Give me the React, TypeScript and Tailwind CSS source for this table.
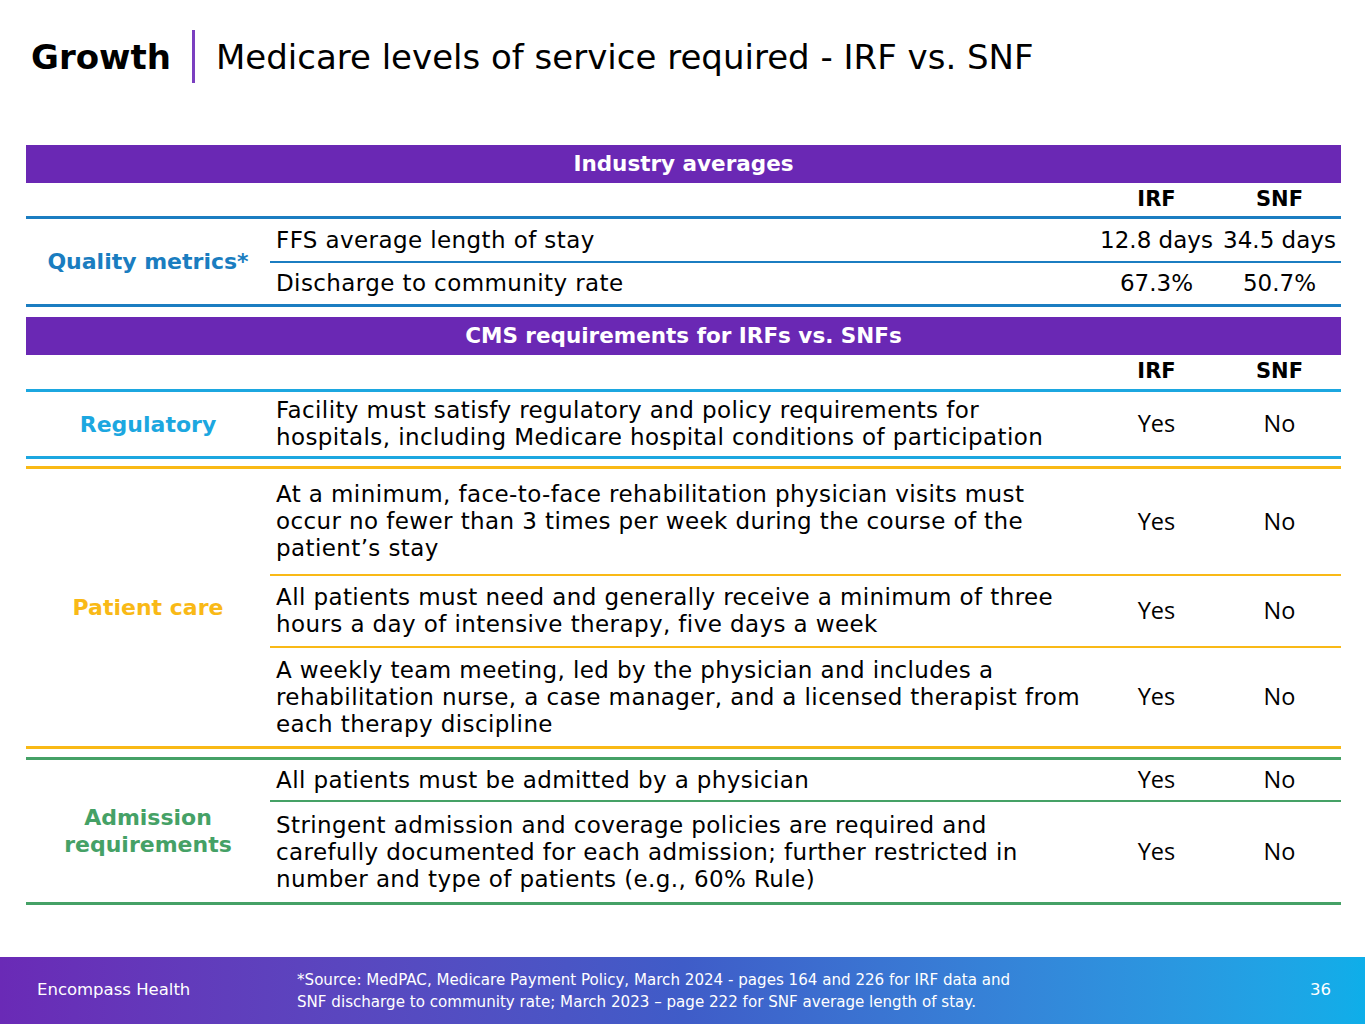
import React from "react";

const PURPLE = "bg-[#6a28b4]";

type Row = { text: React.ReactNode; irf: string; snf: string; h: string };

function DataRow({ row, border, yesNo }: { row: Row; border?: string; yesNo?: boolean }) {
  const val = yesNo ? "font-['Open_Sans',sans-serif] text-[23.5px]" : "";
  return (
    <div className={`flex items-center ${row.h} ${border ?? ""}`}>
      <div className="flex-1 pl-[6px] pr-2 leading-[27px] tracking-[0.4px]">{row.text}</div>
      <div className={`w-[123px] text-center whitespace-nowrap ${val}`}>{row.irf}</div>
      <div className={`w-[123px] text-center whitespace-nowrap ${val}`}>{row.snf}</div>
    </div>
  );
}

function Group({
  label,
  labelColor,
  rows,
  innerBorder,
  className,
}: {
  label: React.ReactNode;
  labelColor: string;
  rows: Row[];
  innerBorder: string;
  className: string;
}) {
  return (
    <div className={`flex ${className}`}>
      <div
        className={`w-[244px] flex items-center justify-center text-center text-[22px] font-bold leading-[27px] ${labelColor}`}
      >
        {label}
      </div>
      <div className="flex-1">
        {rows.map((r, i) => (
          <DataRow
            key={i}
            row={r}
            yesNo={r.irf === "Yes"}
            border={i < rows.length - 1 ? innerBorder : ""}
          />
        ))}
      </div>
    </div>
  );
}

function BarHeader({ title }: { title: string }) {
  return (
    <div
      className={`${PURPLE} h-[38px] flex items-center justify-center text-[21.5px] text-white font-bold`}
    >
      {title}
    </div>
  );
}

function ColHeader({ className }: { className: string }) {
  return (
    <div className={`flex items-center justify-end text-[21px] font-bold ${className}`}>
      <div className="w-[123px] text-center">IRF</div>
      <div className="w-[123px] text-center">SNF</div>
    </div>
  );
}

export default function App() {
  return (
    <div className="h-[1024px] w-[1365px] flex flex-col bg-white text-black font-['DejaVu_Sans',sans-serif] overflow-hidden">
      {/* Title */}
      <div className="flex items-center pl-[31px] pt-[30px]">
        <span className="text-[34px] font-bold leading-none">Growth</span>
        <span className="mx-[21px] h-[53px] w-[3px] bg-[#7b3fc0]" />
        <span className="text-[34px] leading-none">
          Medicare levels of service required - IRF vs. SNF
        </span>
      </div>

      {/* Table */}
      <div className="mt-[62px] ml-[26px] w-[1315px] text-[23px]">
        <BarHeader title="Industry averages" />
        <ColHeader className="h-[36px] border-b-[3px] border-[#1b7dc1]" />
        <Group
          label="Quality metrics*"
          labelColor="text-[#1a7dc0]"
          innerBorder="border-b-2 border-[#1b7dc1]"
          className="border-b-[3px] border-[#1b7dc1]"
          rows={[
            { text: "FFS average length of stay", irf: "12.8 days", snf: "34.5 days", h: "h-[44px]" },
            { text: "Discharge to community rate", irf: "67.3%", snf: "50.7%", h: "h-[41px]" },
          ]}
        />

        <div className="mt-[10px]">
          <BarHeader title="CMS requirements for IRFs vs. SNFs" />
        </div>
        <ColHeader className="h-[37px] border-b-[3px] border-[#1ca7e0]" />
        <Group
          label="Regulatory"
          labelColor="text-[#1ca7e0]"
          innerBorder=""
          className="border-b-[3px] border-[#1ca7e0]"
          rows={[
            {
              text: (
                <>
                  Facility must satisfy regulatory and policy requirements for
                  <br />
                  hospitals, including Medicare hospital conditions of participation
                </>
              ),
              irf: "Yes",
              snf: "No",
              h: "h-[64px]",
            },
          ]}
        />

        <Group
          label="Patient care"
          labelColor="text-[#f9b916]"
          innerBorder="border-b-2 border-[#f9b916]"
          className="mt-[7px] border-y-[3px] border-[#f9b916]"
          rows={[
            {
              text: (
                <>
                  At a minimum, face-to-face rehabilitation physician visits must
                  <br />
                  occur no fewer than 3 times per week during the course of the
                  <br />
                  patient’s stay
                </>
              ),
              irf: "Yes",
              snf: "No",
              h: "h-[107px]",
            },
            {
              text: (
                <>
                  All patients must need and generally receive a minimum of three
                  <br />
                  hours a day of intensive therapy, five days a week
                </>
              ),
              irf: "Yes",
              snf: "No",
              h: "h-[72px]",
            },
            {
              text: (
                <>
                  A weekly team meeting, led by the physician and includes a
                  <br />
                  rehabilitation nurse, a case manager, and a licensed therapist from
                  <br />
                  each therapy discipline
                </>
              ),
              irf: "Yes",
              snf: "No",
              h: "h-[98px]",
            },
          ]}
        />

        <Group
          label={
            <>
              Admission
              <br />
              requirements
            </>
          }
          labelColor="text-[#45a166]"
          innerBorder="border-b-2 border-[#45a166]"
          className="mt-[8px] border-y-[3px] border-[#45a166]"
          rows={[
            { text: "All patients must be admitted by a physician", irf: "Yes", snf: "No", h: "h-[42px]" },
            {
              text: (
                <>
                  Stringent admission and coverage policies are required and
                  <br />
                  carefully documented for each admission; further restricted in
                  <br />
                  number and type of patients (e.g., 60% Rule)
                </>
              ),
              irf: "Yes",
              snf: "No",
              h: "h-[100px]",
            },
          ]}
        />
      </div>

      {/* Footer */}
      <div className="mt-auto h-[67px] flex items-center bg-gradient-to-r from-[#6a2ab6] via-[#3f5cc8] to-[#0eaee9] text-white">
        <div className="w-[297px] pl-[37px] text-[16.5px]">Encompass Health</div>
        <div className="flex-1 text-[15.1px] leading-[22px]">
          *Source: MedPAC, Medicare Payment Policy, March 2024 - pages 164 and 226 for IRF data and
          <br />
          SNF discharge to community rate; March 2023 – page 222 for SNF average length of stay.
        </div>
        <div className="pr-[34px] text-[16.5px]">36</div>
      </div>
    </div>
  );
}
